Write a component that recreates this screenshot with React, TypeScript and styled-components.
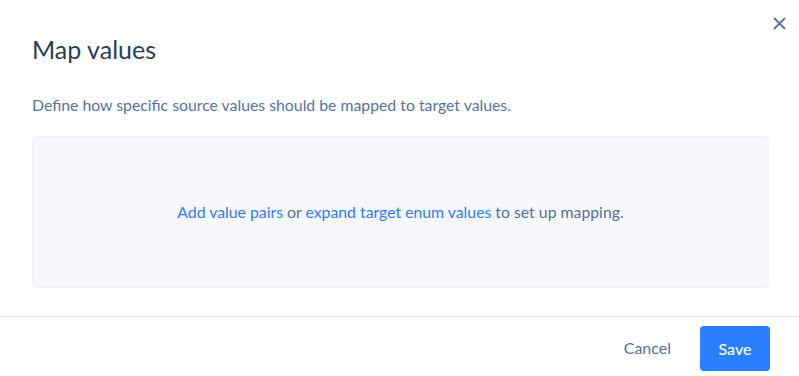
import styled, { createGlobalStyle } from 'styled-components';

const GlobalStyle = createGlobalStyle`
  html, body {
    margin: 0;
    padding: 0;
    background: #ffffff;
  }
  body {
    font-family: Lato, "Noto Sans", sans-serif;
  }
`;

function App() {
  return (
    <>
      <GlobalStyle />
      <Modal>
        <CloseButton aria-label="Close">
          <svg width="13" height="13" viewBox="0 0 13 13" fill="none">
            <path d="M1.5 1.5L11.5 11.5M11.5 1.5L1.5 11.5" stroke="#5f7396" strokeWidth="1.8" strokeLinecap="round" />
          </svg>
        </CloseButton>
        <ModalBody>
          <Title>Map values</Title>
          <Description>Define how specific source values should be mapped to target values.</Description>
          <EmptyBox>
            <EmptyText>
              <LinkText>Add value pairs</LinkText> or <LinkText>expand target enum values</LinkText> to set up mapping.
            </EmptyText>
          </EmptyBox>
        </ModalBody>
        <Footer>
          <TextButton>Cancel</TextButton>
          <PrimaryButton>Save</PrimaryButton>
        </Footer>
      </Modal>
    </>
  );
}

export default App;

const Modal = styled.div`
  position: relative;
  width: 799px;
  height: 376px;
  background: #ffffff;
  display: flex;
  flex-direction: column;
`;

const CloseButton = styled.button`
  position: absolute;
  top: 16px;
  right: 13px;
  width: 14px;
  height: 14px;
  padding: 0;
  border: none;
  background: transparent;
  display: flex;
  align-items: center;
  justify-content: center;
  cursor: pointer;
`;

const ModalBody = styled.div`
  padding: 34px 30px 28px 32px;
`;

const Title = styled.h2`
  margin: 0;
  font-size: 25px;
  font-weight: 400;
  line-height: 30px;
  color: #2c3c57;
`;

const Description = styled.p`
  margin: 30px 0 0;
  font-size: 15.8px;
  line-height: 22px;
  color: #5773a0;
`;

const EmptyBox = styled.div`
  box-sizing: border-box;
  margin-top: 20px;
  height: 152px;
  background: #f7f8fd;
  border: 1px solid #eef1fa;
  border-radius: 4px;
  display: flex;
  align-items: center;
  justify-content: center;
`;

const EmptyText = styled.p`
  margin: 0;
  font-size: 15.8px;
  line-height: 22px;
  color: #5a6f95;
`;

const LinkText = styled.a`
  color: #2f7cf6;
  text-decoration: none;
  cursor: pointer;
`;

const Footer = styled.div`
  box-sizing: border-box;
  border-top: 1px solid #d8e5fb;
  height: 60px;
  padding: 9px 29px 0 0;
  display: flex;
  align-items: flex-start;
  justify-content: flex-end;
  gap: 29px;
`;

const TextButton = styled.button`
  height: 42px;
  padding: 0;
  border: none;
  background: transparent;
  font-family: Lato, "Noto Sans", sans-serif;
  font-size: 16px;
  color: #5a6f95;
  cursor: pointer;
`;

const PrimaryButton = styled.button`
  width: 70px;
  height: 45px;
  border: none;
  border-radius: 4px;
  background: #2a7fff;
  color: #ffffff;
  font-family: Lato, "Noto Sans", sans-serif;
  font-size: 16px;
  font-weight: 500;
  cursor: pointer;
`;
